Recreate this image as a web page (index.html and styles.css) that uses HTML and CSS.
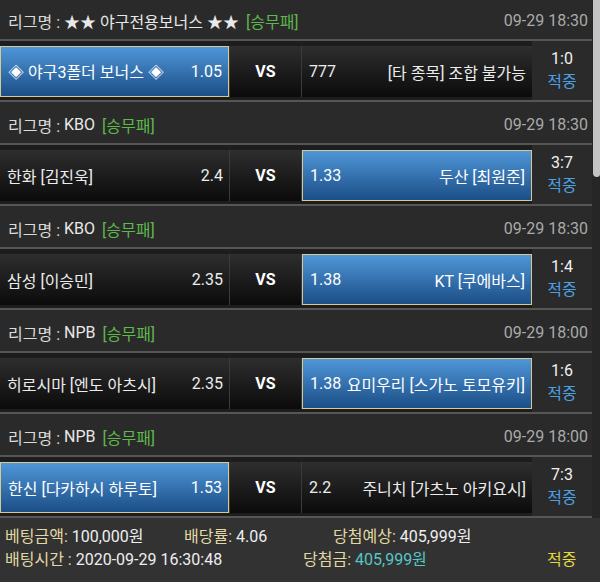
FILE: index.html
```html
<!doctype html>
<html lang="ko">
<head>
  <meta charset="UTF-8">
  <meta name="viewport" content="width=device-width, initial-scale=1">
  <title>배팅내역</title>
  <link rel="stylesheet" href="styles.css">
</head>
<body>
  <div class="page">
    <div class="list">

      <section class="game">
        <div class="league">
          <span class="lbl">리그명 : </span><span class="name">★★ 야구전용보너스 ★★</span><span class="type">[승무패]</span>
          <span class="time">09-29 18:30</span>
        </div>
        <div class="match">
          <div class="pick home on"><span>◈ 야구3폴더 보너스 ◈</span><span>1.05</span></div>
          <div class="vs">VS</div>
          <div class="pick away"><span>777</span><span>[타 종목] 조합 불가능</span></div>
          <div class="score"><span>1:0</span><span class="hit">적중</span></div>
        </div>
      </section>

      <section class="game">
        <div class="league">
          <span class="lbl">리그명 : </span><span class="name">KBO</span><span class="type">[승무패]</span>
          <span class="time">09-29 18:30</span>
        </div>
        <div class="match">
          <div class="pick home"><span>한화 [김진욱]</span><span>2.4</span></div>
          <div class="vs">VS</div>
          <div class="pick away on"><span>1.33</span><span>두산 [최원준]</span></div>
          <div class="score"><span>3:7</span><span class="hit">적중</span></div>
        </div>
      </section>

      <section class="game">
        <div class="league">
          <span class="lbl">리그명 : </span><span class="name">KBO</span><span class="type">[승무패]</span>
          <span class="time">09-29 18:30</span>
        </div>
        <div class="match">
          <div class="pick home"><span>삼성 [이승민]</span><span>2.35</span></div>
          <div class="vs">VS</div>
          <div class="pick away on"><span>1.38</span><span>KT [쿠에바스]</span></div>
          <div class="score"><span>1:4</span><span class="hit">적중</span></div>
        </div>
      </section>

      <section class="game">
        <div class="league">
          <span class="lbl">리그명 : </span><span class="name">NPB</span><span class="type">[승무패]</span>
          <span class="time">09-29 18:00</span>
        </div>
        <div class="match">
          <div class="pick home"><span>히로시마 [엔도 아츠시]</span><span>2.35</span></div>
          <div class="vs">VS</div>
          <div class="pick away on"><span>1.38</span><span>요미우리 [스가노 토모유키]</span></div>
          <div class="score"><span>1:6</span><span class="hit">적중</span></div>
        </div>
      </section>

      <section class="game">
        <div class="league">
          <span class="lbl">리그명 : </span><span class="name">NPB</span><span class="type">[승무패]</span>
          <span class="time">09-29 18:00</span>
        </div>
        <div class="match">
          <div class="pick home on"><span>한신 [다카하시 하루토]</span><span>1.53</span></div>
          <div class="vs">VS</div>
          <div class="pick away"><span>2.2</span><span>주니치 [가츠노 아키요시]</span></div>
          <div class="score"><span>7:3</span><span class="hit">적중</span></div>
        </div>
      </section>

    </div>
    <div class="scroll"><div class="thumb"></div></div>
  </div>

  <footer class="summary">
    <div class="row">
      <span class="c1"><b>베팅금액:</b> 100,000원</span>
      <span class="c2"><b>배당률:</b> 4.06</span>
      <span><b>당첨예상:</b> 405,999원</span>
    </div>
    <div class="row">
      <span class="c3"><b>배팅시간 :</b> 2020-09-29 16:30:48</span>
      <span class="c4"><b>당첨금:</b> <em>405,999원</em></span>
      <span class="result">적중</span>
    </div>
  </footer>
</body>
</html>
```

FILE: styles.css
```css
*{
  box-sizing: border-box;
}
html, body{
  margin: 0;
  padding: 0;
}
body{
  width: 600px;
  height: 582px;
  overflow: hidden;
  background: #2a2a2a;
  color: #e6e6e6;
  font-family: Roboto, "Noto Sans CJK KR", sans-serif;
  font-size: 16px;
}

.page{
  display: flex;
  height: 518px;
  overflow: hidden;
}
.list{
  width: 592px;
  margin-top: -2px;
}
.scroll{
  width: 8px;
  background: #262626;
}
.thumb{
  margin-left: 1px;
  height: 177px;
  background: #c4c4c4;
  border-radius: 0 0 3px 4px;
}

/* league header */
.league{
  display: flex;
  align-items: center;
  height: 43px;
  padding: 4px 4px 0 8px;
  background: #2a2a2a;
  border-bottom: 2px solid #565656;
}
.lbl{
  color: #dcdcdc;
  white-space: pre;
}
.name{
  color: #e8e8e8;
}
.type{
  color: #5fb84c;
  margin-left: 7px;
}
.time{
  margin-left: auto;
  color: #a9a9a9;
}

/* match row */
.match{
  display: flex;
  height: 61px;
  background: #1d1d1d;
  border-bottom: 2px solid #565656;
}
.pick, .vs{
  margin: 5px 0 3px;
  background: linear-gradient(#2e2e2e, #0b0b0b);
}
.pick{
  display: flex;
  align-items: center;
  justify-content: space-between;
  padding: 0 6px 0 7px;
  color: #ececec;
  white-space: nowrap;
}
.home{
  width: 229px;
}
.away{
  width: 230px;
}
.pick.on{
  background: linear-gradient(#4f96d8, #1b4e86);
  border: 1px solid #d9c98e;
  color: #fff;
}
.vs{
  width: 73px;
  display: flex;
  align-items: center;
  justify-content: center;
  font-weight: bold;
  color: #fff;
  border-left: 1px solid #3a3a3a;
  border-right: 1px solid #3a3a3a;
}
.score{
  width: 60px;
  display: flex;
  flex-direction: column;
  align-items: center;
  justify-content: center;
  line-height: 23px;
  background: #2a2a2a;
  color: #f0f0f0;
  padding-bottom: 2px;
}
.hit{
  color: #4ba0e2;
}

/* bottom summary */
.summary{
  height: 64px;
  padding: 7px 0 0 5px;
  background: #323232;
  color: #eeeeee;
  line-height: 23px;
}
.row{
  display: flex;
  white-space: nowrap;
}
.summary b{
  font-weight: normal;
  color: #e2d9a2;
}
.summary em{
  font-style: normal;
  color: #56c6c8;
}
.c1{
  width: 179px;
}
.c2{
  width: 149px;
}
.c3{
  width: 298px;
}
.c4{
  width: 244px;
}
.result{
  color: #e6d640;
}
```
